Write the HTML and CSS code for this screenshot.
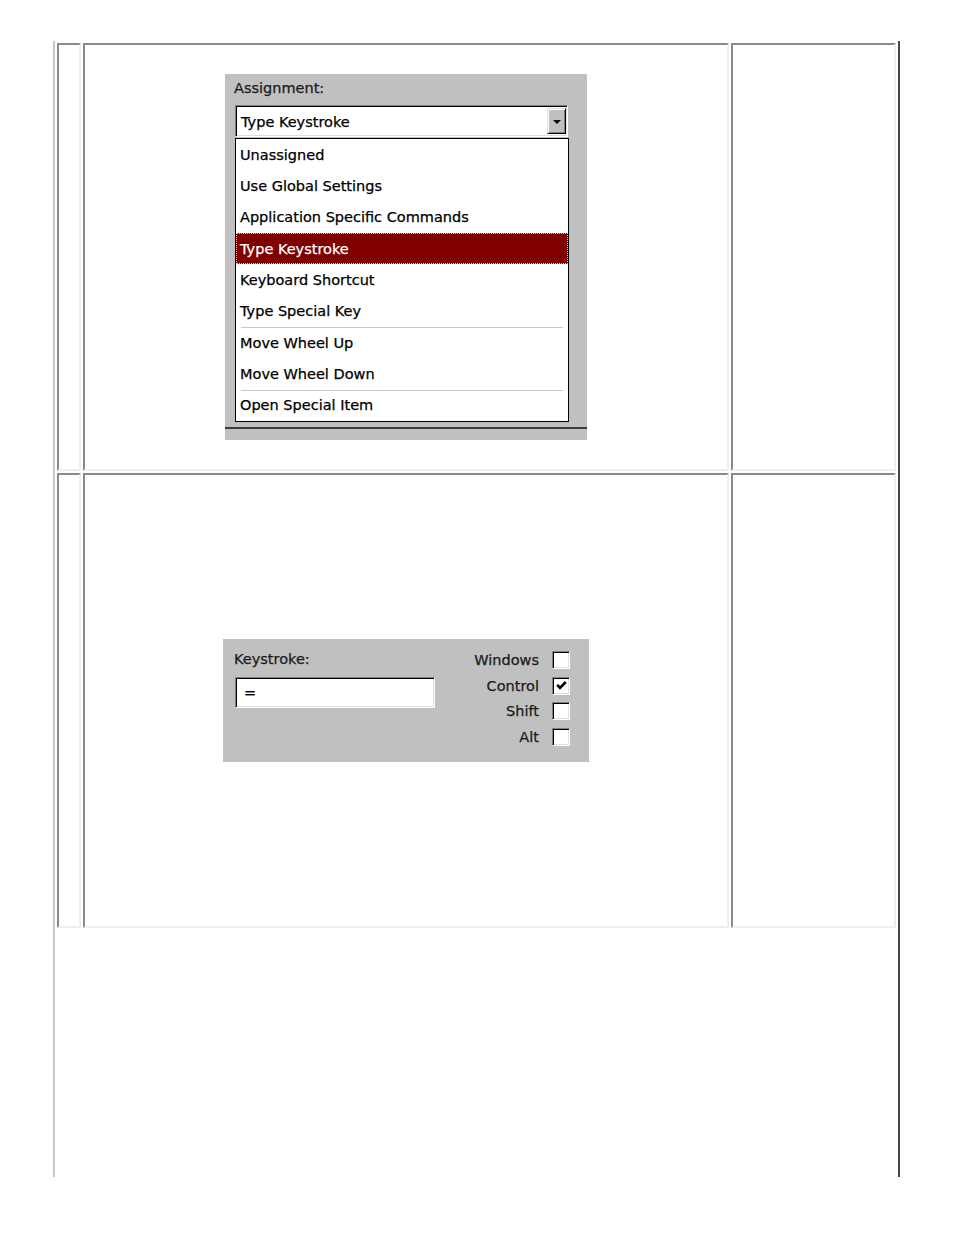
FILE: index.html
```html
<!DOCTYPE html>
<html>
<head>
<meta charset="utf-8">
<title>Assignment</title>
<link rel="stylesheet" href="styles.css">
</head>
<body>
<div class="frame">
  <div class="grid">
    <div class="cell"></div>
    <div class="cell">
      <div class="panel assign">
        <div class="label">Assignment:</div>
        <div class="combo">
          <span class="combo-text">Type Keystroke</span>
          <span class="combo-btn"><span class="arrow"></span></span>
        </div>
        <ul class="list">
          <li>Unassigned</li>
          <li>Use Global Settings</li>
          <li>Application Specific Commands</li>
          <li class="sel">Type Keystroke</li>
          <li>Keyboard Shortcut</li>
          <li>Type Special Key</li>
          <li class="sep">Move Wheel Up</li>
          <li>Move Wheel Down</li>
          <li class="sep">Open Special Item</li>
        </ul>
        <div class="drop-line"></div>
      </div>
    </div>
    <div class="cell"></div>

    <div class="cell"></div>
    <div class="cell">
      <div class="panel keys">
        <div class="keys-left">
          <div class="label label-k">Keystroke:</div>
          <div class="field">=</div>
        </div>
        <div class="keys-right">
          <span class="mod">Windows</span><span class="check"></span>
          <span class="mod">Control</span><span class="check"><svg width="11" height="9" viewBox="0 0 11 9"><polyline points="1.2,3.8 4,6.8 9.8,1" fill="none" stroke="#000" stroke-width="2.6"/></svg></span>
          <span class="mod">Shift</span><span class="check"></span>
          <span class="mod">Alt</span><span class="check"></span>
        </div>
      </div>
    </div>
    <div class="cell"></div>
  </div>
</div>
</body>
</html>
```

FILE: styles.css
```css
html, body {
  margin: 0;
  padding: 0;
  background: #ffffff;
}

body {
  font-family: "DejaVu Sans", "Liberation Sans", sans-serif;
  font-size: 14.5px;
  color: #000;
  -webkit-text-stroke: 0.25px currentColor;
}

.frame {
  margin: 41px 0 0 53px;
  width: 847px;
  height: 1136px;
  box-sizing: border-box;
  border-left: 2px solid #c6c6c6;
  border-right: 2px solid #454545;
  padding: 2px;
}

.grid {
  display: grid;
  grid-template-columns: 24px 646px 165px;
  grid-template-rows: 428px 455px;
  gap: 2px;
}

.cell {
  box-sizing: border-box;
  border-style: solid;
  border-width: 2px;
  border-color: #8a8a8a #efefec #efefec #8a8a8a;
  display: flex;
  align-items: center;
  justify-content: center;
}

.panel {
  background: #c0c0c0;
  box-sizing: border-box;
}

.label {
  line-height: 20px;
  color: #1a1a1a;
  white-space: nowrap;
}

/* Assignment panel */
.assign {
  width: 362px;
  height: 366px;
  padding: 4px 0 11px 0;
  display: flex;
  flex-direction: column;
}

.assign .label {
  padding-left: 9px;
}

.combo {
  margin: 7px 0 0 10px;
  width: 333px;
  height: 32px;
  box-sizing: border-box;
  border: 1px solid;
  border-color: #808080 #ffffff #ffffff #808080;
  box-shadow: inset 1px 1px 0 #000, inset -1px -1px 0 #dfdfdf;
  background: #fff;
  display: flex;
  align-items: center;
}

.combo-text {
  padding-left: 5px;
  padding-top: 1px;
  white-space: nowrap;
}

.combo-btn {
  margin-left: auto;
  margin-right: 1px;
  width: 19px;
  height: 26px;
  box-sizing: border-box;
  background: #c0c0c0;
  border: 1px solid;
  border-color: #dfdfdf #000 #000 #dfdfdf;
  box-shadow: inset 1px 1px 0 #fff, inset -1px -1px 0 #808080;
  display: flex;
  align-items: center;
  justify-content: center;
}

.arrow {
  width: 0;
  height: 0;
  border-left: 4px solid transparent;
  border-right: 4px solid transparent;
  border-top: 4px solid #000;
  margin-top: 1px;
}

.list {
  margin: 1px 0 0 10px;
  padding: 0;
  list-style: none;
  width: 334px;
  height: 284px;
  box-sizing: border-box;
  border: 1px solid #000;
  background: #fff;
  display: grid;
  grid-template-rows: repeat(9, 1fr);
}

.list li {
  display: flex;
  align-items: center;
  padding-left: 4px;
  white-space: nowrap;
}

.list li.sel {
  background: #800000;
  color: #fff;
  outline: 1px dotted #9fe0e0;
  outline-offset: -1px;
}

.list li.sep {
  background: linear-gradient(#c8c8c8, #c8c8c8) no-repeat 5px 0 / calc(100% - 10px) 1px;
}

.drop-line {
  margin-top: 5px;
  height: 2px;
  background: #3c3c3c;
}

/* Keystroke panel */
.keys {
  width: 366px;
  height: 123px;
  padding: 0 19px 0 12px;
  display: flex;
}

.keys-left {
  padding-top: 10px;
}

.label-k {
  margin-left: -1px;
}

.field {
  margin-top: 8px;
  width: 200px;
  height: 31px;
  box-sizing: border-box;
  border: 1px solid;
  border-color: #808080 #ffffff #ffffff #808080;
  box-shadow: inset 1px 1px 0 #000, inset -1px -1px 0 #dfdfdf;
  background: #fff;
  display: flex;
  align-items: center;
  padding-left: 8px;
}

.keys-right {
  margin-left: auto;
  padding-top: 8.5px;
  display: grid;
  grid-template-columns: auto 18px;
  grid-auto-rows: 25.5px;
  column-gap: 13px;
  align-items: center;
}

.mod {
  justify-self: end;
  color: #1a1a1a;
  white-space: nowrap;
}

.check {
  width: 18px;
  height: 18px;
  box-sizing: border-box;
  border: 1px solid;
  border-color: #808080 #ffffff #ffffff #808080;
  box-shadow: inset 1px 1px 0 #000, inset -1px -1px 0 #dfdfdf;
  background: #fff;
  display: flex;
  align-items: center;
  justify-content: center;
}

.check svg {
  display: block;
}
```
